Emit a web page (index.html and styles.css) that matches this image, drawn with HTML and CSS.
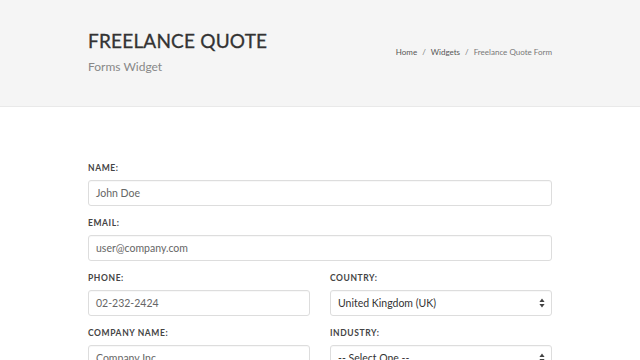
FILE: index.html
```html
<!DOCTYPE html>
<html>
<head>
<meta charset="utf-8">
<link rel="stylesheet" href="styles.css">
</head>
<body>
<header class="page-title">
  <div class="container title-row">
    <div class="title-text">
      <h1>FREELANCE QUOTE</h1>
      <span class="subtitle">Forms Widget</span>
    </div>
    <ol class="breadcrumb">
      <li>Home</li>
      <li class="sep">/</li>
      <li>Widgets</li>
      <li class="sep">/</li>
      <li class="active">Freelance Quote Form</li>
    </ol>
  </div>
</header>
<main class="container form">
  <div class="field">
    <label>Name:</label>
    <div class="input">John Doe</div>
  </div>
  <div class="field">
    <label>Email:</label>
    <div class="input">user@company.com</div>
  </div>
  <div class="row">
    <div class="field">
      <label>Phone:</label>
      <div class="input">02-232-2424</div>
    </div>
    <div class="field">
      <label>Country:</label>
      <div class="input select"><span>United Kingdom (UK)</span>
        <svg width="6" height="10" viewBox="0 0 6 10"><path d="M3 0.5 L5.6 4 H0.4 Z M3 9.5 L5.6 6 H0.4 Z" fill="#444"/></svg>
      </div>
    </div>
  </div>
  <div class="row">
    <div class="field">
      <label>Company Name:</label>
      <div class="input">Company Inc.</div>
    </div>
    <div class="field">
      <label>Industry:</label>
      <div class="input select"><span>-- Select One --</span>
        <svg width="6" height="10" viewBox="0 0 6 10"><path d="M3 0.5 L5.6 4 H0.4 Z M3 9.5 L5.6 6 H0.4 Z" fill="#444"/></svg>
      </div>
    </div>
  </div>
</main>
</body>
</html>
```
FILE: styles.css
```css
* { box-sizing: border-box; }
html, body { margin: 0; padding: 0; background: #fff; }
body { font-family: Lato, "Open Sans", sans-serif; color: #555; overflow: hidden; height: 360px; }
.container { width: 464px; margin: 0 auto; }
.page-title {
  background: #f5f5f5;
  border-bottom: 1px solid #e9e9e9;
  height: 107px;
  padding-top: 30px;
}
.title-row { display: flex; justify-content: space-between; align-items: flex-start; }
h1 {
  margin: 0;
  font-size: 19px;
  line-height: 22px;
  font-weight: 400;
  letter-spacing: 0.2px;
  color: #333;
  -webkit-text-stroke: 0.3px #333;
}
.subtitle { display: block; margin-top: 7px; font-size: 12px; line-height: 16px; color: #888; }
.breadcrumb {
  list-style: none; margin: 16px 0 0; padding: 0;
  display: flex; gap: 5px; font-size: 8px; line-height: 12px; color: #555;
}
.breadcrumb .sep { color: #777; }
.breadcrumb .active { color: #777; }
.form { padding-top: 54px; }
.field { margin-bottom: 10px; }
.row { display: flex; gap: 20px; }
.row .field { flex: 1; }
label {
  display: block;
  font-size: 8.5px;
  line-height: 14px;
  font-weight: 700;
  letter-spacing: 0.6px;
  text-transform: uppercase;
  color: #444;
  margin-bottom: 5px;
}
.input {
  height: 26px;
  border: 1px solid #ddd;
  border-radius: 3px;
  padding: 0 7px;
  display: flex;
  align-items: center;
  font-size: 10.5px;
  color: #666;
  box-shadow: inset 0 1px 1px rgba(0,0,0,0.03);
}
.select { justify-content: space-between; color: #333; padding-right: 6px; }
```
